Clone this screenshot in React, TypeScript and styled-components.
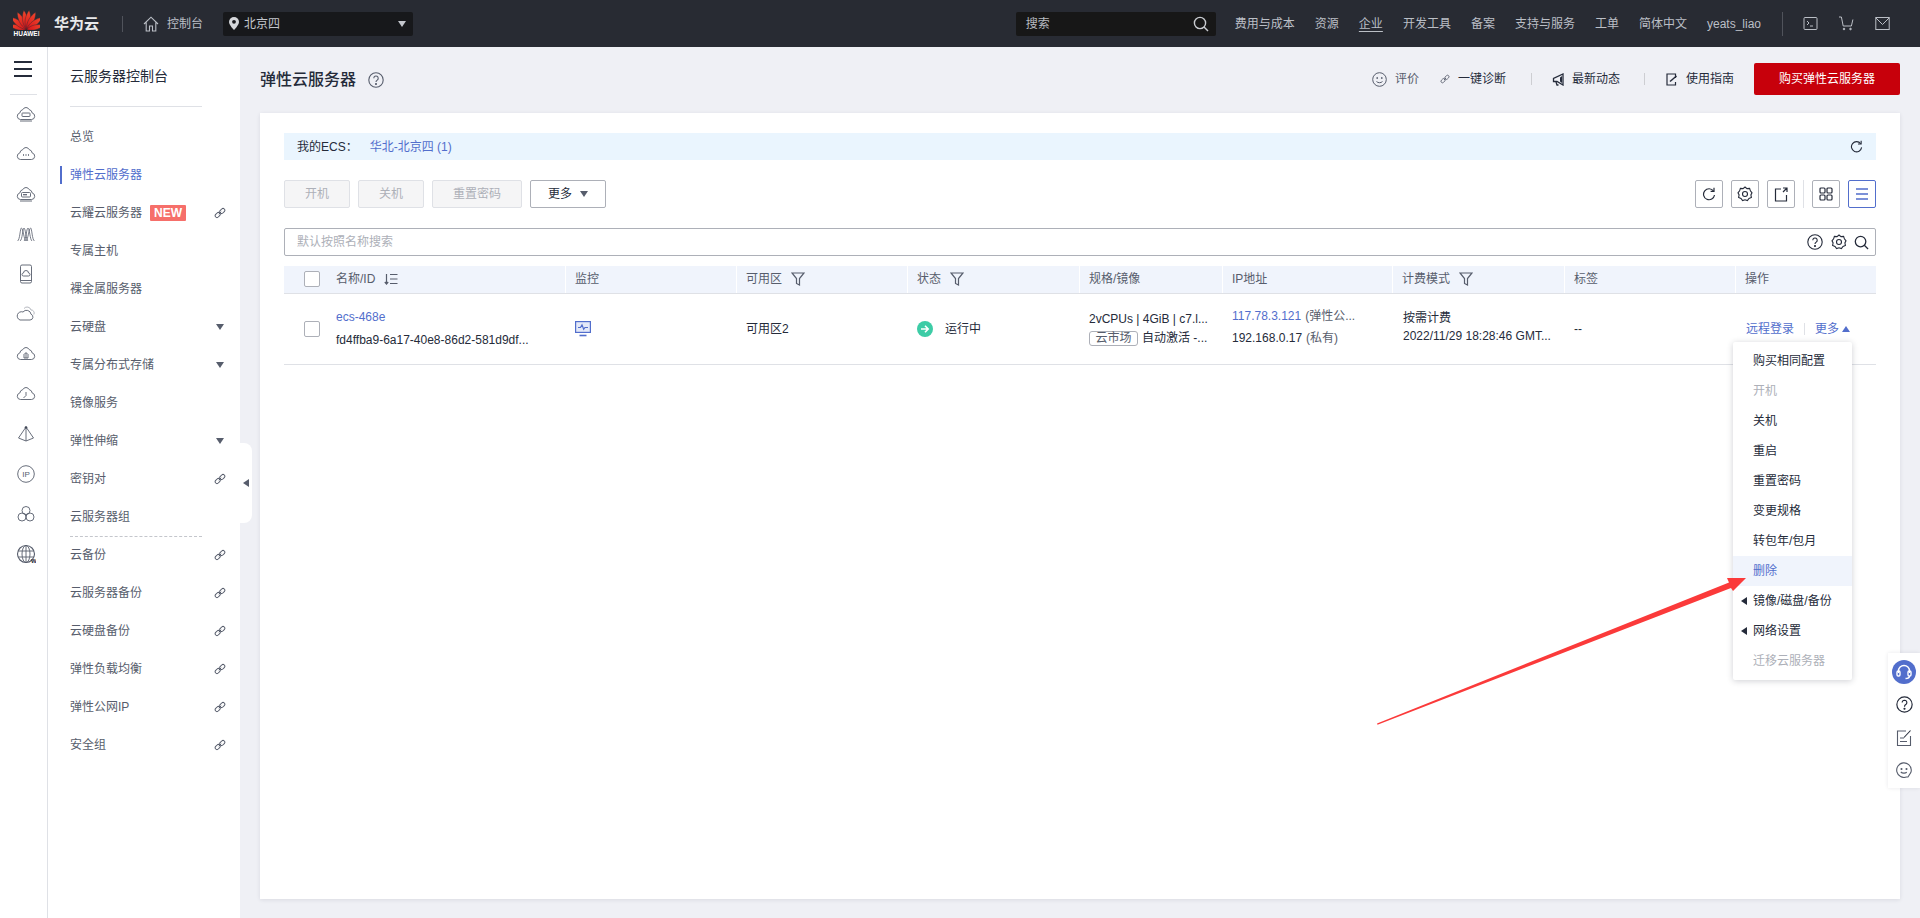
import React from 'react';
import styled, { createGlobalStyle } from 'styled-components';

const FONT = '"Liberation Sans", "Noto Sans CJK SC", Arial, sans-serif';
const BLUE = '#526ecc';
const INK = '#252b3a';
const MUTED = '#575d6c';

const Global = createGlobalStyle`
  html, body { margin: 0; padding: 0; width: 1920px; height: 918px; overflow: hidden; background: #eff0f5; }
  body { font: 12px/18px ${FONT}; color: ${INK}; }
  * { box-sizing: border-box; }
`;

const Page = styled.div`
  position: relative;
  width: 1920px;
  height: 918px;
  overflow: hidden;
  display: flex;
  flex-direction: column;
`;

/* ---------- top bar ---------- */
const TopBar = styled.header`
  height: 47px;
  flex: none;
  background: #282b33;
  display: flex;
  align-items: center;
  color: #bbbfc6;
`;
const Brand = styled.div`
  width: 122px;
  flex: none;
  display: flex;
  align-items: center;
  padding-left: 13px;
`;
const LogoBox = styled.div`
  width: 27px;
  display: flex;
  flex-direction: column;
  align-items: center;
`;
const LogoWord = styled.span`
  font-size: 6.5px;
  line-height: 8px;
  font-weight: 700;
  color: #fff;
  letter-spacing: 0;
`;
const BrandName = styled.span`
  margin-left: 14px;
  font-size: 15px;
  font-weight: 700;
  color: #e8e9eb;
  white-space: nowrap;
`;
const BarDivider = styled.span<{ $h?: number; $ml?: number }>`
  flex: none;
  width: 1px;
  height: ${p => p.$h ?? 16}px;
  background: #50535b;
  margin-left: ${p => p.$ml ?? 0}px;
`;
const HomeLink = styled.div`
  display: flex;
  align-items: center;
  gap: 8px;
  margin-left: 20px;
  width: 80px;
  flex: none;
`;
const RegionSelect = styled.div`
  width: 190px;
  height: 24px;
  flex: none;
  background: #17181b;
  border-radius: 2px;
  display: flex;
  align-items: center;
  padding: 0 7px 0 6px;
  color: #c3c6cc;
  gap: 5px;
`;
const RegionName = styled.span`
  flex: 1;
`;
const TopSearch = styled.div`
  margin-left: auto;
  width: 200px;
  height: 24px;
  flex: none;
  background: #171717;
  border-radius: 2px;
  display: flex;
  align-items: center;
  justify-content: space-between;
  padding: 0 7px 0 10px;
  color: #b8bbc1;
`;
const TopLinks = styled.nav`
  display: flex;
  align-items: center;
  gap: 20px;
  margin-left: 19px;
  white-space: nowrap;
`;
const TopLink = styled.span<{ $underline?: boolean }>`
  color: #bbbfc6;
  text-decoration: ${p => (p.$underline ? 'underline' : 'none')};
  text-underline-offset: 3px;
`;
const TopIcons = styled.div`
  display: flex;
  align-items: center;
  gap: 20px;
  margin-left: 20px;
  padding-right: 30px;
`;

/* ---------- body ---------- */
const Body = styled.div`
  flex: 1;
  display: flex;
  min-height: 0;
`;
const Rail = styled.aside`
  width: 48px;
  flex: none;
  background: #fff;
  border-right: 1px solid #dfe1e6;
  display: flex;
  flex-direction: column;
  align-items: center;
`;
const Burger = styled.div`
  width: 18px;
  height: 16px;
  margin-top: 14px;
  display: flex;
  flex-direction: column;
  justify-content: space-between;
  margin-left: -1px;
  span { display: block; height: 2px; background: #252b3a; }
`;
const RailRule = styled.div`
  width: 27px;
  height: 1px;
  background: #dfe1e6;
  margin: 17px 0 0;
  margin-left: -1px;
`;
const RailIcons = styled.div`
  display: flex;
  flex-direction: column;
  align-items: center;
  margin-top: -1px;
`;
const RailIcon = styled.div`
  width: 40px;
  height: 40px;
  display: flex;
  align-items: center;
  justify-content: center;
  margin-left: 5px;
`;
const SideNav = styled.aside`
  width: 192px;
  flex: none;
  background: #fff;
  position: relative;
  padding: 0 22px;
`;
const NavTitle = styled.div`
  height: 60px;
  font-size: 14px;
  line-height: 58px;
  color: ${INK};
  border-bottom: 1px solid #dfe1e6;
  width: 132px;
  white-space: nowrap;
`;
const NavList = styled.ul`
  list-style: none;
  margin: 11px 0 0;
  padding: 0;
`;
const NavItem = styled.li<{ $active?: boolean; $rule?: boolean }>`
  position: relative;
  height: 38px;
  display: flex;
  align-items: center;
  color: ${p => (p.$active ? BLUE : MUTED)};
  white-space: nowrap;
  ${p => p.$active && `
    &::before {
      content: '';
      position: absolute;
      left: -10px;
      top: 10px;
      width: 2px;
      height: 18px;
      background: ${BLUE};
    }
  `}
  ${p => p.$rule && `
    &::after {
      content: '';
      position: absolute;
      left: 0;
      bottom: -1px;
      width: 132px;
      border-bottom: 1px dashed #c4c6cc;
    }
  `}
`;
const NewBadge = styled.span`
  margin-left: 8px;
  width: 36px;
  height: 16px;
  background: #f66f6a;
  color: #fff;
  font-weight: 700;
  font-size: 12px;
  line-height: 16px;
  text-align: center;
  border-radius: 1px;
`;
const NavTail = styled.span`
  position: absolute;
  right: -9px;
  top: 0;
  height: 100%;
  width: 14px;
  display: flex;
  align-items: center;
  justify-content: center;
`;
const CollapseHandle = styled.div`
  position: absolute;
  right: -12px;
  top: 396px;
  width: 12px;
  height: 80px;
  background: #fff;
  border-radius: 0 8px 8px 0;
  display: flex;
  align-items: center;
  justify-content: center;
  z-index: 2;
`;

/* ---------- main ---------- */
const Main = styled.main`
  flex: 1;
  min-width: 0;
  padding: 16px 20px 0;
`;
const PageHead = styled.div`
  height: 32px;
  display: flex;
  align-items: center;
`;
const PageTitle = styled.h1`
  margin: 0;
  padding-top: 2px;
  font-size: 16px;
  font-weight: 500;
  line-height: 24px;
  color: ${INK};
`;
const HelpWrap = styled.span`
  display: flex;
  margin: 2px 0 0 12px;
`;
const HeadActions = styled.div`
  margin-left: auto;
  display: flex;
  align-items: center;
  white-space: nowrap;
`;
const HeadAction = styled.span<{ $ml: number; $grey?: boolean }>`
  display: flex;
  align-items: center;
  gap: 8px;
  margin-left: ${p => p.$ml}px;
  color: ${p => (p.$grey ? MUTED : INK)};
`;
const HeadSep = styled.span<{ $ml: number }>`
  width: 1px;
  height: 12px;
  background: #cdced2;
  margin-left: ${p => p.$ml}px;
`;
const BuyButton = styled.button`
  margin-left: 20px;
  width: 146px;
  height: 32px;
  background: #c7000b;
  color: #fff;
  border: 0;
  border-radius: 2px;
  font: inherit;
  padding: 0;
`;
const Card = styled.section`
  position: relative;
  margin-top: 18px;
  height: 786px;
  background: #fff;
  box-shadow: 0 1px 4px rgba(37, 43, 58, 0.1);
  padding: 20px 24px;
`;
const Banner = styled.div`
  height: 27px;
  background: #eaf5fe;
  display: flex;
  align-items: center;
  padding: 0 13px;
`;
const BannerLink = styled.span`
  color: ${BLUE};
  margin-left: 12px;
`;
const BannerRefresh = styled.span`
  display: flex;
  margin-left: auto;
  margin-right: 0;
`;
const Toolbar = styled.div`
  margin-top: 20px;
  height: 28px;
  display: flex;
  align-items: center;
  gap: 8px;
`;
const ToolBtn = styled.button<{ $w: number; $off?: boolean }>`
  width: ${p => p.$w}px;
  height: 28px;
  padding: 0;
  font: inherit;
  border-radius: 2px;
  border: 1px solid ${p => (p.$off ? '#dfe1e6' : '#adb0b8')};
  background: ${p => (p.$off ? '#f5f5f6' : '#fff')};
  color: ${p => (p.$off ? '#adb0b8' : INK)};
  display: flex;
  align-items: center;
  justify-content: center;
  gap: 8px;
`;
const ToolRight = styled.div`
  margin-left: auto;
  display: flex;
  align-items: center;
  gap: 8px;
`;
const IconBtn = styled.span<{ $on?: boolean }>`
  width: 28px;
  height: 28px;
  border: 1px solid ${p => (p.$on ? BLUE : '#adb0b8')};
  border-radius: 2px;
  display: flex;
  align-items: center;
  justify-content: center;
  background: #fff;
`;
const ToolSep = styled.span`
  width: 1px;
  height: 28px;
  background: #dfe1e6;
`;
const SearchBar = styled.div`
  margin-top: 20px;
  height: 28px;
  border: 1px solid #adb0b8;
  border-radius: 2px;
  display: flex;
  align-items: center;
  padding: 0 6px 0 12px;
  color: #adb0b8;
`;
const SearchIcons = styled.div`
  margin-left: auto;
  display: flex;
  align-items: center;
  gap: 7px;
`;
const SearchHelp = styled.span`
  display: flex;
  margin-right: 1px;
`;
const Cols = '281px 171px 171px 172px 143px 170px 172px 171px 141px';
const HeadRow = styled.div`
  margin-top: 10px;
  display: grid;
  grid-template-columns: ${Cols};
  height: 28px;
  background: #f0f4fc;
  border-bottom: 1px solid #dfe1e6;
`;
const HeadCell = styled.div<{ $first?: boolean }>`
  display: flex;
  align-items: center;
  padding-left: ${p => (p.$first ? 20 : 9)}px;
  padding-bottom: 1px;
  color: ${MUTED};
  border-left: ${p => (p.$first ? 0 : '1px solid #fff')};
  white-space: nowrap;
`;
const HeadLabel = styled.span`
  margin-right: 9px;
`;
const Check = styled.span`
  width: 16px;
  height: 16px;
  flex: none;
  border: 1px solid #adb0b8;
  border-radius: 2px;
  background: #fff;
  margin-right: 16px;
`;
const DataRow = styled.div`
  display: grid;
  grid-template-columns: ${Cols};
  height: 71px;
  border-bottom: 1px solid #dfe1e6;
`;
const Cell = styled.div<{ $first?: boolean; $lift?: number; $pl?: number }>`
  display: flex;
  align-items: center;
  padding-left: ${p => p.$pl ?? (p.$first ? 20 : 10)}px;
  padding-bottom: ${p => p.$lift ?? 0}px;
  white-space: nowrap;
  min-width: 0;
`;
const Stack = styled.div<{ $gap: number }>`
  display: flex;
  flex-direction: column;
  gap: ${p => p.$gap}px;
`;
const LinkText = styled.span`
  color: ${BLUE};
`;
const GreyText = styled.span`
  color: ${MUTED};
  margin-left: 4px;
`;
const StatusText = styled.span`
  margin-left: 12px;
`;
const SmallTag = styled.span`
  height: 15px;
  line-height: 13px;
  width: 49px;
  text-align: center;
  border: 1px solid #adb0b8;
  border-radius: 3px;
  color: ${MUTED};
  margin-right: 4px;
`;
const TagRow = styled.div`
  display: flex;
  align-items: center;
`;
const OpSep = styled.span`
  width: 1px;
  height: 12px;
  background: #dfe1e6;
  margin: 0 10px;
`;
const UpCaret = styled.span`
  display: flex;
  margin-left: 3px;
`;
const Menu = styled.ul`
  position: absolute;
  top: 229px;
  right: 48px;
  width: 119px;
  margin: 0;
  padding: 4px 0;
  list-style: none;
  background: #fff;
  border-radius: 2px;
  box-shadow: 0 1px 6px rgba(37, 43, 58, 0.22);
  z-index: 3;
`;
const MenuItem = styled.li<{ $off?: boolean; $hot?: boolean }>`
  position: relative;
  height: 30px;
  line-height: 30px;
  padding-left: 20px;
  color: ${p => (p.$hot ? BLUE : p.$off ? '#adb0b8' : INK)};
  background: ${p => (p.$hot ? '#f0f4fc' : 'transparent')};
  white-space: nowrap;
`;
const MenuCaret = styled.span`
  position: absolute;
  left: 7px;
  top: 11px;
  display: flex;
`;
const Float = styled.div`
  position: absolute;
  left: 1888px;
  top: 653px;
  width: 32px;
  height: 135px;
  background: #fff;
  box-shadow: 0 0 4px rgba(37, 43, 58, 0.1);
  display: flex;
  flex-direction: column;
  align-items: center;
  padding-top: 7px;
  z-index: 4;
`;
const FloatItem = styled.div<{ $mt: number }>`
  display: flex;
  margin-top: ${p => p.$mt}px;
`;
const Annotation = styled.svg`
  position: absolute;
  left: 0;
  top: 0;
  pointer-events: none;
  z-index: 5;
`;

/* ---------- icons ---------- */
type SvgP = { s?: number; c?: string };

const HuaweiLogo = () => {
  const angles = [-76, -52, -28, -8, 8, 28, 52, 76];
  return (
    <svg width="27" height="20" viewBox="0 0 54 40">
      <defs>
        <linearGradient id="hw" x1="0" y1="0" x2="0" y2="1">
          <stop offset="0" stopColor="#f0492c" />
          <stop offset="1" stopColor="#d5111b" />
        </linearGradient>
      </defs>
      {angles.map((a, i) => (
        <path
          key={i}
          d={Math.abs(a) > 60 ? 'M27 39 C20 28 21 14 27 4 C33 14 34 28 27 39 Z' : 'M27 39 C19 26 21 10 27 0 C33 10 35 26 27 39 Z'}
          fill="url(#hw)"
          transform={`rotate(${a} 27 39)`}
          stroke="#282b33"
          strokeWidth="0.8"
        />
      ))}
    </svg>
  );
};
const HomeIcon = () => (
  <svg width="16" height="16" viewBox="0 0 16 16" fill="none" stroke="#bbbfc6" strokeWidth="1.1">
    <path d="M1 8 8 1.2 15 8M3.2 6.4V15h3.3v-5h3v5h3.3V6.4" />
  </svg>
);
const PinIcon = () => (
  <svg width="10" height="13" viewBox="0 0 10 13">
    <path d="M5 0a5 5 0 0 1 5 5c0 3-5 8-5 8S0 8 0 5a5 5 0 0 1 5-5Z" fill="#d5d7db" />
    <circle cx="5" cy="4.8" r="1.9" fill="#17181b" />
  </svg>
);
const Tri = ({ dir = 'down', c = '#bbbfc6', s = 8 }: { dir?: 'down' | 'up' | 'left'; c?: string; s?: number }) => {
  const pts = { down: '0,1 8,1 4,7', up: '0,7 8,7 4,1', left: '7,0 7,8 1,4' }[dir];
  return (
    <svg width={s} height={s} viewBox="0 0 8 8">
      <polygon points={pts} fill={c} />
    </svg>
  );
};
const SearchGlass = ({ s = 16, c = '#c9ccd1' }: SvgP) => (
  <svg width={s} height={s} viewBox="0 0 16 16" fill="none" stroke={c} strokeWidth="1.4">
    <circle cx="7" cy="7" r="5.6" />
    <path d="m11 11 4 4" />
  </svg>
);
const TermIcon = () => (
  <svg width="15" height="15" viewBox="0 0 15 15" fill="none" stroke="#bbbfc6">
    <rect x="1" y="1.5" width="13" height="12" rx="1" />
    <path d="m4 5 2 2-2 2M7 10h3" />
  </svg>
);
const CartIcon = () => (
  <svg width="17" height="15" viewBox="0 0 17 15" fill="none" stroke="#bbbfc6">
    <path d="M1 1h2.4l1.8 9h8.2l1.5-6.5" />
    <circle cx="6" cy="13" r=".8" fill="#bbbfc6" />
    <circle cx="12.5" cy="13" r=".8" fill="#bbbfc6" />
  </svg>
);
const MailIcon = () => (
  <svg width="15" height="15" viewBox="0 0 15 15" fill="none" stroke="#bbbfc6">
    <rect x=".8" y="1.5" width="13.4" height="12" />
    <path d="m1 2 6.5 6.5L14 2" />
  </svg>
);
const LinkIcon = ({ s = 12, c = '#575d6c' }: SvgP) => (
  <svg width={s} height={s} viewBox="0 0 12 12" fill="none" stroke={c} strokeWidth="1">
    <rect x="0.9" y="6.2" width="5.6" height="3.6" rx="1.8" transform="rotate(-45 3.7 8)" />
    <rect x="5.5" y="2.2" width="5.6" height="3.6" rx="1.8" transform="rotate(-45 8.3 4)" />
    <path d="M4.8 7.2 7.2 4.8" />
  </svg>
);
const CloudPath = 'M4.5 15.5h11a3.3 3.3 0 0 0 .7-6.5 4 4 0 0 0-3-3.4A3.6 3.6 0 0 0 10 3.5 3.6 3.6 0 0 0 6.800 5.600a4 4 0 0 0-3 3.400 3.300 3.300 0 0 0 .7 6.500Z';
const RC = ({ children }: { children?: React.ReactNode }) => (
  <svg width="20" height="20" viewBox="0 0 20 20" fill="none" stroke="#575d6c" strokeWidth="0.9">
    {children}
  </svg>
);
const railIcons: React.ReactNode[] = [
  <RC key="1"><path d={CloudPath} /><rect x="6" y="9" width="8" height="3.500" rx=".6" /><path d="M4 17h12" /></RC>,
  <RC key="2"><path d={CloudPath} /><path d="M7 11h1M9.500 11h1M12 11h1" strokeWidth="1.300" /></RC>,
  <RC key="3"><path d={CloudPath} /><rect x="5.500" y="8.500" width="9" height="4.500" rx="1" /><path d="M7 10.700h4" strokeWidth="1.200" /><path d="M4 17h12" /></RC>,
  <RC key="4"><path d="M1.500 17C4 16 4 4 5.500 4S8 16 10 17C12 16 13 4 14.500 4S16 16 18.500 17" strokeWidth="0.8" /><path d="M4 17C6.500 16 6.500 4 8 4S10 16 12 17M8 17C10 16 10.500 4 12 4S14 16 16 17" strokeWidth="0.8" /></RC>,
  <RC key="5"><rect x="4.500" y="1" width="11" height="18" rx="1.500" /><path d="M7.500 12h5a1.500 1.500 0 0 0 0-3 2.500 2.500 0 0 0-5 0 1.500 1.500 0 0 0 0 3Z" /><path d="M5 16.500h10" /></RC>,
  <RC key="6"><path d="M4 16h10a3 3 0 0 0 1-5.800A4.500 4.500 0 0 0 7 8 3.800 3.800 0 0 0 4 16Z" /><path d="M8 4.500a4 4 0 0 1 7 1.500 3 3 0 0 1 2.800 4.500" stroke="#adb0b8" /></RC>,
  <RC key="7"><path d={CloudPath} /><path d="M10 14V9M7.500 11 10 8.500 12.500 11" /><path d="M8 11v3h4v-3" /></RC>,
  <RC key="8"><path d={CloudPath} /><path d="M10 8v3.500L7.500 14" /></RC>,
  <RC key="9"><path d="M10 3 2.500 14 10 17l7.500-3ZM10 3v14" /><circle cx="10" cy="3.500" r="1" fill="#252b3a" /></RC>,
  <RC key="10"><circle cx="10" cy="10" r="8.300" /><text x="10" y="13" fontSize="8" textAnchor="middle" stroke="none" fill="#575d6c" fontFamily="Liberation Sans">IP</text></RC>,
  <RC key="11"><circle cx="10" cy="6.500" r="4" /><circle cx="6" cy="13" r="4" /><circle cx="14" cy="13" r="4" /></RC>,
  <RC key="12"><circle cx="10" cy="10" r="8.500" strokeWidth="1.100" /><ellipse cx="10" cy="10" rx="4" ry="8.500" /><path d="M2 7h16M2 13h16M10 1.500v17" /><text x="15" y="18.500" fontSize="6" fontWeight="700" stroke="none" fill="#252b3a" fontFamily="Liberation Sans">W</text></RC>,
];
const HelpIcon = ({ s = 16, c = '#575d6c' }: SvgP) => (
  <svg width={s} height={s} viewBox="0 0 16 16" fill="none" stroke={c} strokeWidth="1.100">
    <circle cx="8" cy="8" r="7.200" />
    <path d="M5.800 6.200a2.200 2.200 0 1 1 3.400 1.900c-.8.5-1.200.9-1.200 1.900" />
    <circle cx="8" cy="12" r=".5" fill={c} />
  </svg>
);
const SmileIcon = () => (
  <svg width="15" height="15" viewBox="0 0 15 15" fill="none" stroke="#575d6c">
    <circle cx="7.500" cy="7.500" r="6.800" />
    <circle cx="5.200" cy="6" r=".5" fill="#575d6c" />
    <circle cx="9.800" cy="6" r=".5" fill="#575d6c" />
    <path d="M4.500 9.500c1.500 1.600 4.500 1.600 6 0" />
  </svg>
);
const Megaphone = () => (
  <svg width="12" height="13" viewBox="0 0 12 13">
    <path d="M11 1v11L5 8.500H1.500V5.500L11 1Z" fill="none" stroke="#252b3a" strokeWidth="1.300" />
    <path d="M4 9l1 3h1.500" fill="none" stroke="#252b3a" strokeWidth="1.300" />
    <path d="M8 4.500v4l2 1.500V3Z" fill="#252b3a" />
  </svg>
);
const GuideIcon = () => (
  <svg width="12" height="13" viewBox="0 0 12 13" fill="none" stroke="#252b3a" strokeWidth="1.200">
    <path d="M9.500 5V1H1v11h8.500V9" />
    <path d="M4 8.500 10.500 3" strokeWidth="1.500" />
  </svg>
);
const RefreshIcon = ({ s = 14, c = '#252b3a' }: SvgP) => (
  <svg width={s} height={s} viewBox="0 0 14 14" fill="none" stroke={c} strokeWidth="1.200">
    <path d="M11.500 4A5.500 5.500 0 1 0 12.500 8" />
    <path d="M12 .8V4.300H8.600" />
  </svg>
);
const GearIcon = ({ s = 16, c = '#252b3a' }: SvgP) => (
  <svg width={s} height={s} viewBox="0 0 16 16" fill="none" stroke={c} strokeWidth="1.100">
    <path d="M8 1 10 2.600 12.600 2.400 13.400 4.800 15 6.800 13.900 8.900 14.400 11.400 12 12.400 10.400 14.600 8 13.800 5.600 14.600 4 12.400 1.600 11.400 2.100 8.900 1 6.800 2.600 4.800 3.400 2.400 6 2.600Z" />
    <circle cx="8" cy="8" r="2.500" />
  </svg>
);
const ExportIcon = () => (
  <svg width="14" height="15" viewBox="0 0 14 15" fill="none" stroke="#252b3a" strokeWidth="1.200">
    <path d="M7 2H1.500v12h11V8M9 1h4v4M13 1 9 5" />
  </svg>
);
const GridIcon = () => (
  <svg width="14" height="14" viewBox="0 0 14 14" fill="none" stroke="#252b3a" strokeWidth="1.200">
    <rect x="1" y="1" width="5" height="5" rx="1" />
    <rect x="8" y="1" width="5" height="5" rx="1" />
    <rect x="1" y="8" width="5" height="5" rx="1" />
    <rect x="8" y="8" width="5" height="5" rx="1" />
  </svg>
);
const ListIcon = () => (
  <svg width="14" height="14" viewBox="0 0 14 14" fill="none" stroke={BLUE} strokeWidth="1.400">
    <path d="M1 2h12M1 7h12M1 12h12" />
  </svg>
);
const SortIcon = () => (
  <svg width="14" height="12" viewBox="0 0 14 12" fill="none" stroke="#575d6c" strokeWidth="1.200">
    <path d="M2.500 1v10M.8 9l1.700 2 1.700-2M6 1.500h7.500M6 6h7.500M6 10.500h7.500" />
  </svg>
);
const FilterIcon = () => (
  <svg width="14" height="14" viewBox="0 0 14 14" fill="none" stroke="#575d6c" strokeWidth="1.200">
    <path d="M1 1h12L8.500 6.500V13l-3-1.500v-5Z" />
  </svg>
);
const MonitorIcon = () => (
  <svg width="16" height="16" viewBox="0 0 16 16" fill="none" stroke={BLUE} strokeWidth="1.200">
    <rect x=".6" y=".6" width="14.800" height="10.800" fill="#e4e9f8" />
    <path d="M3 6.500h2.500L7 3.800l1.700 4.400L10 6.500h3" />
    <path d="M4.500 14.500h7" strokeWidth="1.600" />
  </svg>
);
const RunIcon = () => (
  <svg width="16" height="16" viewBox="0 0 16 16">
    <circle cx="8" cy="8" r="8" fill="#3dcca6" />
    <path d="M4 8h7M8 4.800 11.200 8 8 11.200" fill="none" stroke="#fff" strokeWidth="1.600" />
  </svg>
);
const HeadsetIcon = () => (
  <svg width="24" height="24" viewBox="0 0 24 24">
    <circle cx="12" cy="12" r="12" fill={BLUE} />
    <g fill="none" stroke="#fff" strokeWidth="1.400">
      <path d="M6.500 13v-2a5.500 5.500 0 0 1 11 0v2" />
      <rect x="5" y="11" width="3" height="5" rx="1.200" />
      <rect x="16" y="11" width="3" height="5" rx="1.200" />
      <path d="M17.500 16c0 1.500-2 2.500-4 2.500" />
    </g>
  </svg>
);
const NoteIcon = () => (
  <svg width="16" height="18" viewBox="0 0 16 18" fill="none" stroke="#575d6c" strokeWidth="1.100">
    <path d="M10 2H1.500v14.500h13V7" />
    <path d="M4 9h4M4 12.500h7" />
    <path d="M8 8.500 14.500 1.500" stroke="#252b3a" />
  </svg>
);
const ChatSmile = () => (
  <svg width="16" height="16" viewBox="0 0 16 16" fill="none" stroke="#575d6c" strokeWidth="1.100">
    <path d="M10.500 15A7.300 7.300 0 1 1 15.300 8c0 1-.2 1.800-.5 2.600L12 15Z" />
    <circle cx="5.500" cy="7" r=".5" fill="#575d6c" />
    <circle cx="10.500" cy="7" r=".5" fill="#575d6c" />
    <path d="M4.800 10c1.500 1.500 4.500 1.500 6 .3" />
  </svg>
);

/* ---------- data ---------- */
type NavEntry = { t: string; tail?: 'link' | 'tri'; active?: boolean; badge?: boolean; rule?: boolean };
const navItems: NavEntry[] = [
  { t: '总览' },
  { t: '弹性云服务器', active: true },
  { t: '云耀云服务器', badge: true, tail: 'link' },
  { t: '专属主机' },
  { t: '裸金属服务器' },
  { t: '云硬盘', tail: 'tri' },
  { t: '专属分布式存储', tail: 'tri' },
  { t: '镜像服务' },
  { t: '弹性伸缩', tail: 'tri' },
  { t: '密钥对', tail: 'link' },
  { t: '云服务器组', rule: true },
  { t: '云备份', tail: 'link' },
  { t: '云服务器备份', tail: 'link' },
  { t: '云硬盘备份', tail: 'link' },
  { t: '弹性负载均衡', tail: 'link' },
  { t: '弹性公网IP', tail: 'link' },
  { t: '安全组', tail: 'link' },
];
const topLinks = ['费用与成本', '资源', '企业', '开发工具', '备案', '支持与服务', '工单', '简体中文', 'yeats_liao'];
type MenuEntry = { t: string; off?: boolean; hot?: boolean; sub?: boolean };
const menu: MenuEntry[] = [
  { t: '购买相同配置' },
  { t: '开机', off: true },
  { t: '关机' },
  { t: '重启' },
  { t: '重置密码' },
  { t: '变更规格' },
  { t: '转包年/包月' },
  { t: '删除', hot: true },
  { t: '镜像/磁盘/备份', sub: true },
  { t: '网络设置', sub: true },
  { t: '迁移云服务器', off: true },
];

export default function App() {
  return (
    <Page>
      <Global />
      <TopBar>
        <Brand>
          <LogoBox>
            <HuaweiLogo />
            <LogoWord>HUAWEI</LogoWord>
          </LogoBox>
          <BrandName>华为云</BrandName>
        </Brand>
        <BarDivider />
        <HomeLink>
          <HomeIcon />
          <span>控制台</span>
        </HomeLink>
        <RegionSelect>
          <PinIcon />
          <RegionName>北京四</RegionName>
          <Tri c="#c3c6cc" />
        </RegionSelect>
        <TopSearch>
          <span>搜索</span>
          <SearchGlass />
        </TopSearch>
        <TopLinks>
          {topLinks.map(t => (
            <TopLink key={t} $underline={t === '企业'}>{t}</TopLink>
          ))}
        </TopLinks>
        <BarDivider $h={24} $ml={21} />
        <TopIcons>
          <TermIcon />
          <CartIcon />
          <MailIcon />
        </TopIcons>
      </TopBar>
      <Body>
        <Rail>
          <Burger><span /><span /><span /></Burger>
          <RailRule />
          <RailIcons>
            {railIcons.map((ic, i) => (
              <RailIcon key={i}>{ic}</RailIcon>
            ))}
          </RailIcons>
        </Rail>
        <SideNav>
          <NavTitle>云服务器控制台</NavTitle>
          <NavList>
            {navItems.map(n => (
              <NavItem key={n.t} $active={n.active} $rule={n.rule}>
                {n.t}
                {n.badge && <NewBadge>NEW</NewBadge>}
                {n.tail && (
                  <NavTail>
                    {n.tail === 'link' ? <LinkIcon /> : <Tri c="#575d6c" />}
                  </NavTail>
                )}
              </NavItem>
            ))}
          </NavList>
          <CollapseHandle><Tri dir="left" c="#575d6c" /></CollapseHandle>
        </SideNav>
        <Main>
          <PageHead>
            <PageTitle>弹性云服务器</PageTitle>
            <HelpWrap><HelpIcon /></HelpWrap>
            <HeadActions>
              <HeadAction $ml={0} $grey><SmileIcon />评价</HeadAction>
              <HeadAction $ml={21}><LinkIcon s={10} />一键诊断</HeadAction>
              <HeadSep $ml={25} />
              <HeadAction $ml={20}><Megaphone />最新动态</HeadAction>
              <HeadSep $ml={24} />
              <HeadAction $ml={21}><GuideIcon />使用指南</HeadAction>
              <BuyButton>购买弹性云服务器</BuyButton>
            </HeadActions>
          </PageHead>
          <Card>
            <Banner>
              <span>我的ECS：</span>
              <BannerLink>华北-北京四 (1)</BannerLink>
              <BannerRefresh><RefreshIcon s={13} /></BannerRefresh>
            </Banner>
            <Toolbar>
              <ToolBtn $w={66} $off>开机</ToolBtn>
              <ToolBtn $w={66} $off>关机</ToolBtn>
              <ToolBtn $w={90} $off>重置密码</ToolBtn>
              <ToolBtn $w={76}>更多<Tri c="#575d6c" /></ToolBtn>
              <ToolRight>
                <IconBtn><RefreshIcon /></IconBtn>
                <IconBtn><GearIcon /></IconBtn>
                <IconBtn><ExportIcon /></IconBtn>
                <ToolSep />
                <IconBtn><GridIcon /></IconBtn>
                <IconBtn $on><ListIcon /></IconBtn>
              </ToolRight>
            </Toolbar>
            <SearchBar>
              默认按照名称搜索
              <SearchIcons>
                <SearchHelp><HelpIcon c="#252b3a" /></SearchHelp>
                <GearIcon c="#252b3a" />
                <SearchGlass s={15} c="#252b3a" />
              </SearchIcons>
            </SearchBar>
            <HeadRow>
              <HeadCell $first><Check /><HeadLabel>名称/ID</HeadLabel><SortIcon /></HeadCell>
              <HeadCell>监控</HeadCell>
              <HeadCell><HeadLabel>可用区</HeadLabel><FilterIcon /></HeadCell>
              <HeadCell><HeadLabel>状态</HeadLabel><FilterIcon /></HeadCell>
              <HeadCell>规格/镜像</HeadCell>
              <HeadCell>IP地址</HeadCell>
              <HeadCell><HeadLabel>计费模式</HeadLabel><FilterIcon /></HeadCell>
              <HeadCell>标签</HeadCell>
              <HeadCell>操作</HeadCell>
            </HeadRow>
            <DataRow>
              <Cell $first $lift={1}>
                <Check />
                <Stack $gap={5}>
                  <LinkText>ecs-468e</LinkText>
                  <span>fd4ffba9-6a17-40e8-86d2-581d9df...</span>
                </Stack>
              </Cell>
              <Cell $lift={1}><MonitorIcon /></Cell>
              <Cell $lift={1}>可用区2</Cell>
              <Cell $lift={1}><RunIcon /><StatusText>运行中</StatusText></Cell>
              <Cell $lift={1}>
                <Stack $gap={1}>
                  <span>2vCPUs | 4GiB | c7.l...</span>
                  <TagRow><SmallTag>云市场</SmallTag>自动激活 -...</TagRow>
                </Stack>
              </Cell>
              <Cell $lift={4}>
                <Stack $gap={4}>
                  <span><LinkText>117.78.3.121</LinkText><GreyText>(弹性公...</GreyText></span>
                  <span>192.168.0.17<GreyText>(私有)</GreyText></span>
                </Stack>
              </Cell>
              <Cell $lift={5} $pl={11}>
                <Stack $gap={0}>
                  <span>按需计费</span>
                  <span>2022/11/29 18:28:46 GMT...</span>
                </Stack>
              </Cell>
              <Cell $lift={0}>--</Cell>
              <Cell $lift={1} $pl={11}>
                <LinkText>远程登录</LinkText>
                <OpSep />
                <LinkText>更多</LinkText>
                <UpCaret><Tri dir="up" c={BLUE} /></UpCaret>
              </Cell>
            </DataRow>
            <Menu>
              {menu.map(m => (
                <MenuItem key={m.t} $off={m.off} $hot={m.hot}>
                  {m.sub && <MenuCaret><Tri dir="left" c={INK} /></MenuCaret>}
                  {m.t}
                </MenuItem>
              ))}
            </Menu>
          </Card>
        </Main>
      </Body>
      <Float>
        <FloatItem $mt={0}><HeadsetIcon /></FloatItem>
        <FloatItem $mt={12}><HelpIcon s={17} c="#252b3a" /></FloatItem>
        <FloatItem $mt={16}><NoteIcon /></FloatItem>
        <FloatItem $mt={15}><ChatSmile /></FloatItem>
      </Float>
      <Annotation width="1920" height="918" viewBox="0 0 1920 918">
        <polygon points="1377,723.500 1729,582.500 1727,578 1746,578 1733,591 1731,588 1377.500,724.800" fill="#fb3a3a" />
      </Annotation>
    </Page>
  );
}
